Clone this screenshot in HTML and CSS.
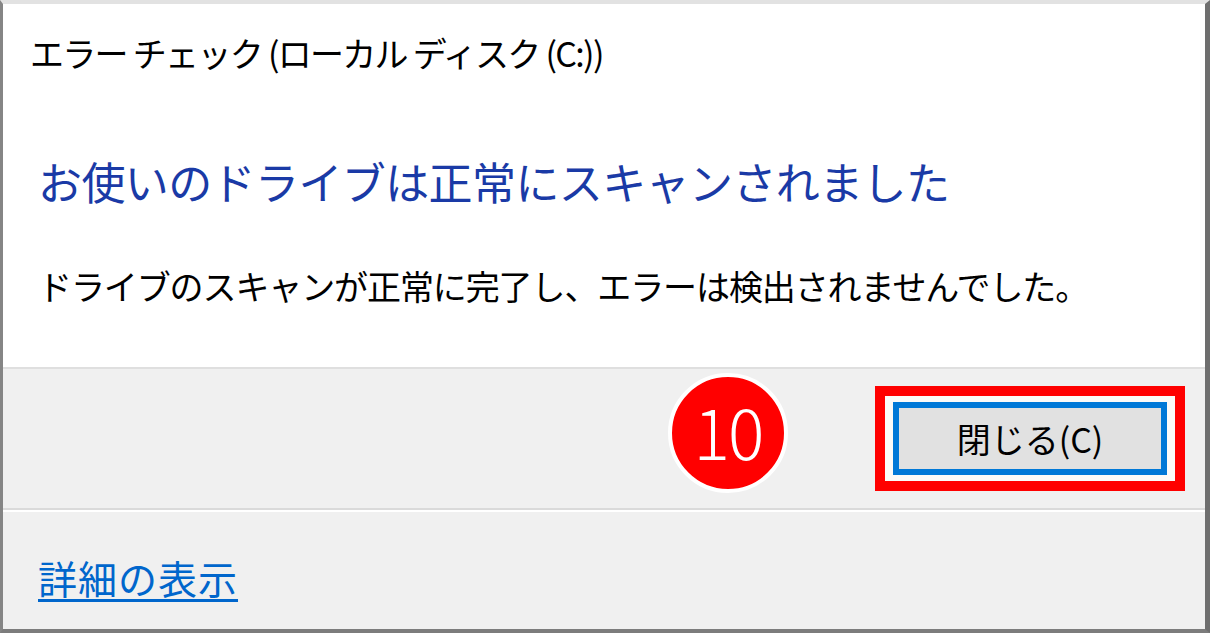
FILE: index.html
```html
<!DOCTYPE html>
<html lang="ja">
<head>
    <meta charset="UTF-8">
    <meta name="viewport" content="width=device-width, initial-scale=1.0">
    <title>エラー チェック</title>
    <link rel="stylesheet" href="styles.css">
</head>
<body>
    <div class="window">
        <div class="main">
            <div class="caption">エラー チェック (ローカル ディスク (C:))</div>
            <h1 class="instruction">お使いのドライブは正常にスキャンされました</h1>
            <p class="message">ドライブのスキャンが正常に完了し、エラーは検出されませんでした。</p>
        </div>
        <div class="button-bar">
            <div class="step-badge">10</div>
            <div class="highlight">
                <button class="close-button">閉じる(C)</button>
            </div>
        </div>
        <div class="details">
            <a href="#" class="details-link">詳細の表示</a>
        </div>
    </div>
</body>
</html>
```

FILE: styles.css
```css
body {
    margin: 0;
    font-family: "Noto Sans CJK JP", "Noto Sans", sans-serif;
    background-color: #ffffff;
}
.window {
    width: 1210px;
    height: 633px;
    box-sizing: border-box;
    display: flex;
    flex-direction: column;
    border-top: 4px solid #e2e2e2;
    border-left: 3px solid #858585;
    border-right: 5px solid #6e6e6e;
    border-bottom: 4px solid #7c7c7c;
}
.main {
    height: 363px;
    box-sizing: border-box;
    padding: 29px 0 0 27px;
    background-color: #ffffff;
}
.caption {
    font-size: 34px;
    line-height: 40px;
    letter-spacing: -1.7px;
    color: #000000;
}
.instruction {
    margin: 80px 0 0 8px;
    font-size: 44px;
    line-height: 56px;
    font-weight: normal;
    letter-spacing: -0.6px;
    color: #1a3aa6;
}
.message {
    margin: 55px 0 0 8px;
    font-size: 34px;
    line-height: 44px;
    letter-spacing: -1.1px;
    color: #000000;
}
.button-bar {
    height: 143px;
    box-sizing: border-box;
    display: flex;
    align-items: center;
    justify-content: flex-end;
    gap: 87px;
    padding-right: 20px;
    background-color: #f0f0f0;
    border-top: 2px solid #dfdfdf;
    border-bottom: 2px solid #dadada;
}
.step-badge {
    width: 120px;
    height: 120px;
    margin-bottom: 12px;
    box-sizing: border-box;
    border: 4px solid #ffffff;
    border-radius: 50%;
    background-color: #ff0000;
    color: #ffffff;
    font-size: 68px;
    font-weight: 200;
    line-height: 108px;
    text-align: center;
    letter-spacing: -2px;
}
.highlight {
    border: 10px solid #ff0000;
    padding: 6px 8px;
    background-color: #fbfaf8;
}
.close-button {
    display: block;
    width: 274px;
    height: 73px;
    border: 6px solid #0078d7;
    background-color: #e1e1e1;
    font-family: inherit;
    font-size: 34px;
    color: #000000;
    padding: 0;
}
.details {
    flex: 1;
    padding: 41px 0 0 35px;
    background-color: #f0f0f0;
    border-top: 2px solid #ffffff;
}
.details-link {
    font-size: 39px;
    line-height: 48px;
    letter-spacing: 1px;
    color: #0066cc;
    text-decoration: underline;
    text-underline-offset: 5px;
}
```
